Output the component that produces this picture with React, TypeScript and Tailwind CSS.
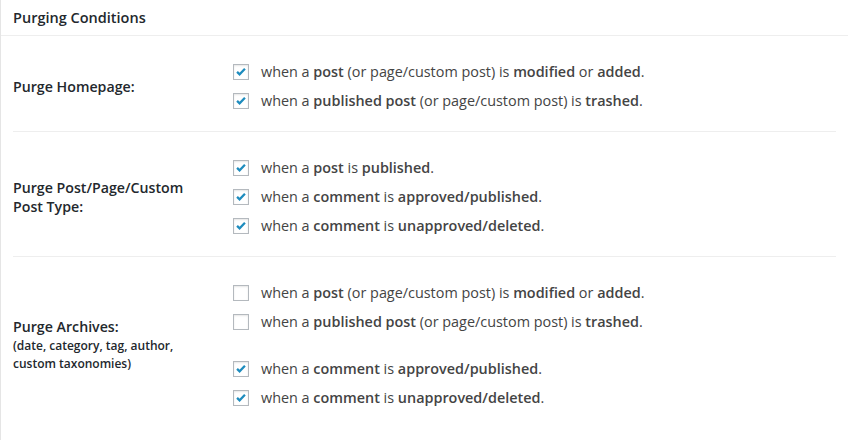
import React from "react";

type Opt = { checked: boolean; parts: (string | [string])[] };

const Check = ({ checked }: { checked: boolean }) => (
  <span className="w-4 h-4 shrink-0 border border-[#b4b9be] bg-white shadow-[inset_0_1px_2px_rgba(0,0,0,0.1)] flex items-center justify-center">
    {checked && (
      <svg viewBox="0 0 16 16" className="w-4 h-4">
        <path d="M3.5 7.8 L6.4 10.7 L12.5 4.3" fill="none" stroke="#1e8cbe" strokeWidth="2.6" />
      </svg>
    )}
  </span>
);

const Line = ({ opt }: { opt: Opt }) => (
  <label className="flex items-center gap-3 h-[29px]">
    <Check checked={opt.checked} />
    <span>
      {opt.parts.map((p, i) =>
        typeof p === "string" ? (
          <React.Fragment key={i}>{p}</React.Fragment>
        ) : (
          <b key={i} className="font-semibold">
            {p[0]}
          </b>
        )
      )}
    </span>
  </label>
);

const modified: (string | [string])[] = ["when a ", ["post"], " (or page/custom post) is ", ["modified"], " or ", ["added"], "."];
const trashed: (string | [string])[] = ["when a ", ["published post"], " (or page/custom post) is ", ["trashed"], "."];
const published: (string | [string])[] = ["when a ", ["post"], " is ", ["published"], "."];
const approved: (string | [string])[] = ["when a ", ["comment"], " is ", ["approved/published"], "."];
const deleted: (string | [string])[] = ["when a ", ["comment"], " is ", ["unapproved/deleted"], "."];

const Row = ({ label, children, last }: { label: React.ReactNode; children: React.ReactNode; last?: boolean }) => (
  <div className={`flex items-center pt-[21px] pb-[16px] ${last ? "" : "border-b border-[#eeeeee]"}`}>
    <div className="w-[220px] shrink-0 pr-[10px] font-semibold text-[#23282d] text-[14.2px] leading-[19px]">{label}</div>
    <div className="flex flex-col text-[14.4px]">{children}</div>
  </div>
);

export default function App() {
  return (
    <div className="w-[848px] h-[440px] bg-white border-l border-[#e5e5e5] text-[14px] text-[#444] font-['Open_Sans',sans-serif] overflow-hidden">
      <h2 className="h-9 px-3 flex items-center border-b border-[#eeeeee] text-[14.5px] font-semibold text-[#23282d]">
        Purging Conditions
      </h2>
      <div className="px-3">
        <Row label="Purge Homepage:">
          <Line opt={{ checked: true, parts: modified }} />
          <Line opt={{ checked: true, parts: trashed }} />
        </Row>
        <Row label={<>Purge Post/Page/Custom<br />Post Type:</>}>
          <Line opt={{ checked: true, parts: published }} />
          <Line opt={{ checked: true, parts: approved }} />
          <Line opt={{ checked: true, parts: deleted }} />
        </Row>
        <Row
          last
          label={
            <>
              <div className="mb-[1px]">Purge Archives:</div>
              <div className="text-[12px] leading-[18px]">
                (date, category, tag, author,
                <br />
                custom taxonomies)
              </div>
            </>
          }
        >
          <Line opt={{ checked: false, parts: modified }} />
          <Line opt={{ checked: false, parts: trashed }} />
          <div className="h-[18px]" />
          <Line opt={{ checked: true, parts: approved }} />
          <Line opt={{ checked: true, parts: deleted }} />
        </Row>
      </div>
    </div>
  );
}
